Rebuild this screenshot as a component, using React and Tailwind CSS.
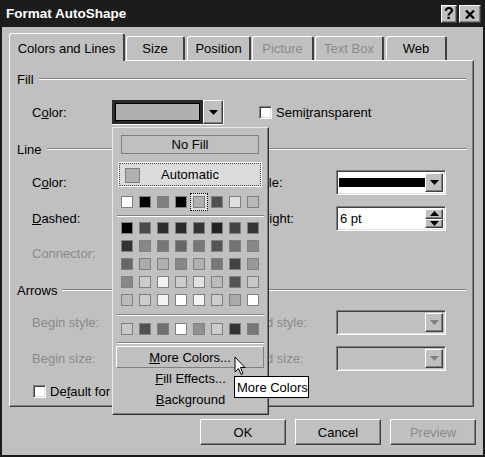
import React from "react";

const raised =
  "border border-t-white border-l-white border-r-[#404040] border-b-[#404040] shadow-[inset_-1px_-1px_0_#808080]";
const sunken =
  "border border-t-[#808080] border-l-[#808080] border-r-white border-b-white shadow-[inset_1px_1px_0_#404040,inset_-1px_-1px_0_#dfdfdf]";

const topRow = ["bg-white", "bg-black", "bg-[#808080]", "bg-black", "bg-[#b0b0b0]", "bg-[#505050]", "bg-[#e0e0e0]", "bg-[#b8b8b8]"];
const grid = [
  ["bg-black", "bg-[#4a4a4a]", "bg-[#2c2c2c]", "bg-[#2a2a2a]", "bg-[#333333]", "bg-[#222222]", "bg-[#444444]", "bg-[#333333]"],
  ["bg-[#333333]", "bg-[#888888]", "bg-[#777777]", "bg-[#666666]", "bg-[#777777]", "bg-[#555555]", "bg-[#727272]", "bg-[#888888]"],
  ["bg-[#666666]", "bg-[#aaaaaa]", "bg-[#b0b0b0]", "bg-[#888888]", "bg-[#b0b0b0]", "bg-[#777777]", "bg-[#444444]", "bg-[#999999]"],
  ["bg-[#888888]", "bg-[#cccccc]", "bg-[#f2f2f2]", "bg-[#cccccc]", "bg-[#e2e2e2]", "bg-[#bbbbbb]", "bg-[#555555]", "bg-[#c8c8c8]"],
  ["bg-[#bbbbbb]", "bg-[#cccccc]", "bg-[#f2f2f2]", "bg-white", "bg-[#f4f4f4]", "bg-[#cccccc]", "bg-[#aaaaaa]", "bg-white"],
];
const recent = ["bg-[#c8c8c8]", "bg-[#505050]", "bg-[#707070]", "bg-white", "bg-[#909090]", "bg-[#cccccc]", "bg-[#333333]", "bg-[#777777]"];

function Arrow({ disabled }) {
  return (
    <svg width="9" height="5" viewBox="0 0 9 5">
      <path d="M0 0h9L4.5 5z" fill={disabled ? "#808080" : "#000"} />
    </svg>
  );
}

function Swatch({ c, sel }) {
  if (sel)
    return (
      <div className="w-[12px] h-[12px] relative">
        <div className="absolute -inset-[3px] border border-dotted border-black bg-[#dedede]" />
        <div className={`absolute inset-0 border border-[#808080] ${c}`} />
      </div>
    );
  return <div className={`w-[12px] h-[12px] border border-[#808080] ${c}`} />;
}

function SwatchRow({ list, selIdx }) {
  return (
    <div className="flex gap-[6px] pl-[8px]">
      {list.map((c, i) => (
        <Swatch key={i} c={c} sel={i === selIdx} />
      ))}
    </div>
  );
}

function Sep() {
  return <div className="mx-[4px] h-[2px] border-t border-[#808080] border-b border-b-white" />;
}

function Header({ children }) {
  return (
    <div className="h-[16px] flex items-center pl-[7px] pr-[7px]">
      <span>{children}</span>
      <div className="flex-1 ml-[5px] h-[2px] border-t border-[#808080] border-b border-b-white" />
    </div>
  );
}

function Combo({ w, disabled, children }) {
  return (
    <div className={`${w} h-[25px] ${sunken} flex p-[2px] ${disabled ? "bg-[#c0c0c0]" : "bg-white"}`}>
      <div className="flex-1 flex items-center">{children}</div>
      <div className={`w-[18px] ${raised} bg-[#c0c0c0] flex items-center justify-center`}>
        <Arrow disabled={disabled} />
      </div>
    </div>
  );
}

function Check({ children }) {
  return (
    <div className="flex items-center gap-[4px]">
      <div className={`w-[13px] h-[13px] shrink-0 bg-white ${sunken}`} />
      <span className="whitespace-nowrap">{children}</span>
    </div>
  );
}

function Btn({ children, disabled }) {
  return (
    <div
      className={`w-[86px] h-[26px] ${raised} flex items-center justify-center ${disabled ? "text-[#8a8a8a]" : ""}`}
    >
      {children}
    </div>
  );
}

function Tab({ w, active, disabled, children }) {
  return (
    <div
      className={`${w} ${
        active ? "h-[28px] -mb-[1px] z-10 bg-[#c0c0c0] pt-[1px]" : "h-[24px]"
      } rounded-t-[3px] border-t border-l border-white border-r-2 border-r-[#404040] flex items-center justify-center ${
        disabled ? "text-[#8a8a8a]" : ""
      }`}
    >
      {children}
    </div>
  );
}

export default function App() {
  return (
    <div className="w-[485px] h-[457px] bg-[#c0c0c0] flex flex-col border-x-2 border-b-2 border-[#1a1a1a] relative overflow-hidden font-['Liberation_Sans',Arial,sans-serif] text-[13px] text-black leading-none select-none">
      {/* title bar */}
      <div className="h-[27px] shrink-0 bg-[#1c1c1c] flex items-center justify-between pl-[4px] pr-[2px]">
        <span className="text-white font-bold text-[13.5px]">Format AutoShape</span>
        <div className="flex gap-[2px] mt-[1px]">
          <div className={`w-[16px] h-[18px] ${raised} bg-[#c0c0c0] flex items-center justify-center font-bold text-[16px]`}>
            ?
          </div>
          <div className={`w-[22px] h-[18px] ${raised} bg-[#c0c0c0] flex items-center justify-center`}>
            <svg width="10" height="9" viewBox="0 0 10 9">
              <path d="M1 0.5L9 8.5M9 0.5L1 8.5" stroke="#000" strokeWidth="2.2" />
            </svg>
          </div>
        </div>
      </div>

      {/* tabs */}
      <div className="pl-[7px] mt-[6px] h-[27px] flex items-end">
        <Tab w="w-[116px]" active>
          Colors and Lines
        </Tab>
        <div className="w-[1px]" />
        <Tab w="w-[59px]">Size</Tab>
        <div className="w-[2px]" />
        <Tab w="w-[64px]">Position</Tab>
        <div className="w-[1px]" />
        <Tab w="w-[62px]" disabled>
          Picture
        </Tab>
        <div className="w-[1px]" />
        <Tab w="w-[69px]" disabled>
          Text Box
        </Tab>
        <div className="w-[2px]" />
        <Tab w="w-[61px]">Web</Tab>
      </div>

      {/* panel */}
      <div className="ml-[7px] w-[465px] h-[347px] border border-t-white border-l-white border-r-[#404040] border-b-[#404040] shadow-[inset_-1px_-1px_0_#808080] flex flex-col">
        <div className="mt-[10px]">
          <Header>Fill</Header>
        </div>
        <div className="mt-[13px] h-[25px] flex items-center pl-[22px]">
          <span className="w-[80px]">
            C<u>o</u>lor:
          </span>
          <div className="w-[112px] h-[25px] flex border-r border-b border-white">
            <div className="flex-1 border-[3px] border-[#2a2a2a] bg-[#b0b0b0] shadow-[inset_0_0_0_1px_#000]" />
            <div className={`w-[20px] ${raised} bg-[#c0c0c0] flex items-center justify-center`}>
              <Arrow />
            </div>
          </div>
          <div className="ml-[35px]">
            <Check>
              Semi<u>t</u>ransparent
            </Check>
          </div>
        </div>

        <div className="mt-[16px]">
          <Header>Line</Header>
        </div>
        <div className="mt-[13px] h-[25px] flex items-center pl-[22px]">
          <span className="w-[80px]">
            C<u>o</u>lor:
          </span>
          <Combo w="w-[112px]" />
          <span className="ml-[26px] w-[86px]">
            <u>S</u>tyle:
          </span>
          <Combo w="w-[110px]">
            <div className="w-full h-[9px] bg-black" />
          </Combo>
        </div>
        <div className="mt-[11px] h-[25px] flex items-center pl-[22px]">
          <span className="w-[80px]">
            <u>D</u>ashed:
          </span>
          <Combo w="w-[112px]" />
          <span className="ml-[26px] w-[86px]">
            <u>W</u>eight:
          </span>
          <div className={`w-[110px] h-[25px] ${sunken} bg-white flex p-[2px]`}>
            <div className="flex-1 flex items-center pl-[1px]">6 pt</div>
            <div className="w-[18px] flex flex-col">
              <div className={`flex-1 ${raised} bg-[#c0c0c0] flex items-center justify-center`}>
                <svg width="9" height="5" viewBox="0 0 9 5">
                  <path d="M0 5h9L4.5 0z" fill="#000" />
                </svg>
              </div>
              <div className={`flex-1 ${raised} bg-[#c0c0c0] flex items-center justify-center`}>
                <Arrow />
              </div>
            </div>
          </div>
        </div>
        <div className="mt-[10px] h-[25px] flex items-center pl-[22px] text-[#8a8a8a]">
          <span className="w-[80px]">Connector:</span>
        </div>

        <div className="mt-[16px]">
          <Header>Arrows</Header>
        </div>
        <div className="mt-[12px] h-[25px] flex items-center pl-[22px] text-[#8a8a8a]">
          <span className="w-[80px]">Begin style:</span>
          <Combo w="w-[112px]" disabled />
          <span className="ml-[26px] w-[86px]">End style:</span>
          <Combo w="w-[110px]" disabled />
        </div>
        <div className="mt-[11px] h-[25px] flex items-center pl-[22px] text-[#8a8a8a]">
          <span className="w-[80px]">Begin size:</span>
          <Combo w="w-[112px]" disabled />
          <span className="ml-[26px] w-[86px]">End size:</span>
          <Combo w="w-[110px]" disabled />
        </div>
        <div className="mt-[13px] h-[14px] flex items-center pl-[23px]">
          <Check>
            De<u>f</u>ault for
          </Check>
        </div>
      </div>

      {/* buttons */}
      <div className="mt-[12px] flex justify-end gap-[9px] pr-[7px]">
        <Btn>OK</Btn>
        <Btn>Cancel</Btn>
        <Btn disabled>Preview</Btn>
      </div>

      {/* color popup */}
      <div className="absolute left-[110px] top-[127px] w-[157px] h-[288px] bg-[#c0c0c0] border border-t-[#e8e8e8] border-l-[#e8e8e8] border-r-[#303030] border-b-[#303030] shadow-[inset_-1px_-1px_0_#808080] flex flex-col">
        <div className="mt-[7px] ml-[8px] w-[138px] h-[19px] border border-[#808080] flex items-center justify-center">
          No Fill
        </div>
        <div className="mt-[8px] ml-[5px] w-[144px] h-[25px] border border-white">
          <div className="w-full h-full border border-dotted border-[#404040] bg-[#dcdcdc] relative flex items-center justify-center">
            <div className="absolute left-[5px] top-[4px] w-[15px] h-[15px] border border-[#808080] bg-[#b0b0b0]" />
            <span>Automatic</span>
          </div>
        </div>
        <div className="mt-[9px]">
          <SwatchRow list={topRow} selIdx={4} />
        </div>
        <div className="mt-[7px]">
          <Sep />
        </div>
        <div className="mt-[5px] flex flex-col gap-[6px]">
          {grid.map((row, i) => (
            <SwatchRow key={i} list={row} />
          ))}
        </div>
        <div className="mt-[8px]">
          <Sep />
        </div>
        <div className="mt-[7px]">
          <SwatchRow list={recent} />
        </div>
        <div className="mt-[7px]">
          <Sep />
        </div>
        <div className="mt-[2px] ml-[3px] w-[148px] h-[22px] border border-t-white border-l-white border-r-[#808080] border-b-[#808080] flex items-center justify-center">
          <span>
            <u>M</u>ore Colors...
          </span>
        </div>
        <div className="h-[21px] flex items-center justify-center">
          <span>
            <u>F</u>ill Effects...
          </span>
        </div>
        <div className="h-[21px] flex items-center justify-center">
          <span>
            <u>B</u>ackground
          </span>
        </div>
      </div>

      {/* cursor */}
      <svg className="absolute left-[232px] top-[356px]" width="13" height="20" viewBox="0 0 13 20">
        <path d="M1 1v15l3.5-3.5 2.5 6 2-1-2.5-6H11z" fill="#fff" stroke="#000" strokeWidth="1" strokeLinejoin="miter" />
      </svg>

      {/* tooltip */}
      <div className="absolute left-[232px] top-[376px] w-[75px] h-[22px] bg-white border border-black flex items-center pl-[2px]">
        More Colors
      </div>
    </div>
  );
}
